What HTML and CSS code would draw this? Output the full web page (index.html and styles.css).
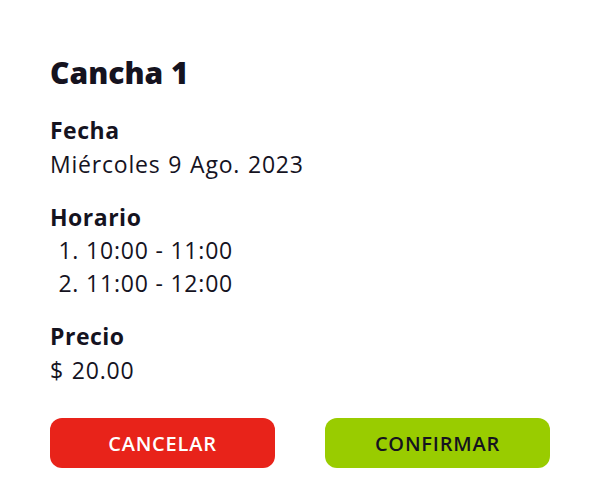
FILE: index.html
```html
<!DOCTYPE html>
<html lang="es">
<head>
<meta charset="utf-8">
<link rel="stylesheet" href="styles.css">
</head>
<body>
<div class="card">
  <h1 class="title">Cancha 1</h1>
  <section class="block">
    <h2 class="label">Fecha</h2>
    <p class="value">Miércoles 9 Ago. 2023</p>
  </section>
  <section class="block">
    <h2 class="label">Horario</h2>
    <ol class="list">
      <li>10:00 - 11:00</li>
      <li>11:00 - 12:00</li>
    </ol>
  </section>
  <section class="block">
    <h2 class="label">Precio</h2>
    <p class="value">$ 20.00</p>
  </section>
  <div class="actions">
    <button class="btn btn-cancel">CANCELAR</button>
    <button class="btn btn-confirm">CONFIRMAR</button>
  </div>
</div>
</body>
</html>
```
FILE: styles.css
```css
html, body {
  margin: 0;
  padding: 0;
  background: #ffffff;
}
body {
  font-family: "Open Sans", "Noto Sans", sans-serif;
  color: #15131f;
}
.card {
  width: 500px;
  padding: 53px 50px 0;
  box-sizing: content-box;
}
.title {
  margin: 0 0 20px;
  font-size: 30px;
  line-height: 40px;
  font-weight: 800;
}
.block {
  margin-bottom: 19px;
}
.label {
  margin: 0;
  font-size: 23px;
  line-height: 34px;
  font-weight: 700;
  letter-spacing: 0.5px;
}
.value {
  margin: 0;
  font-size: 23px;
  line-height: 34px;
  letter-spacing: 0.8px;
  word-spacing: 1px;
}
.list {
  margin: 0;
  padding: 0 0 0 36px;
  font-size: 23px;
  line-height: 33px;
  letter-spacing: 0.8px;
}
.actions {
  display: flex;
  gap: 50px;
  margin-top: 31px;
}
.btn {
  flex: 1;
  height: 50px;
  border: none;
  border-radius: 12px;
  font-family: inherit;
  font-size: 20px;
  font-weight: 600;
  letter-spacing: 0.8px;
}
.btn-cancel {
  background: #e8231a;
  color: #ffffff;
}
.btn-confirm {
  background: #99cc00;
  color: #15131f;
}
```
